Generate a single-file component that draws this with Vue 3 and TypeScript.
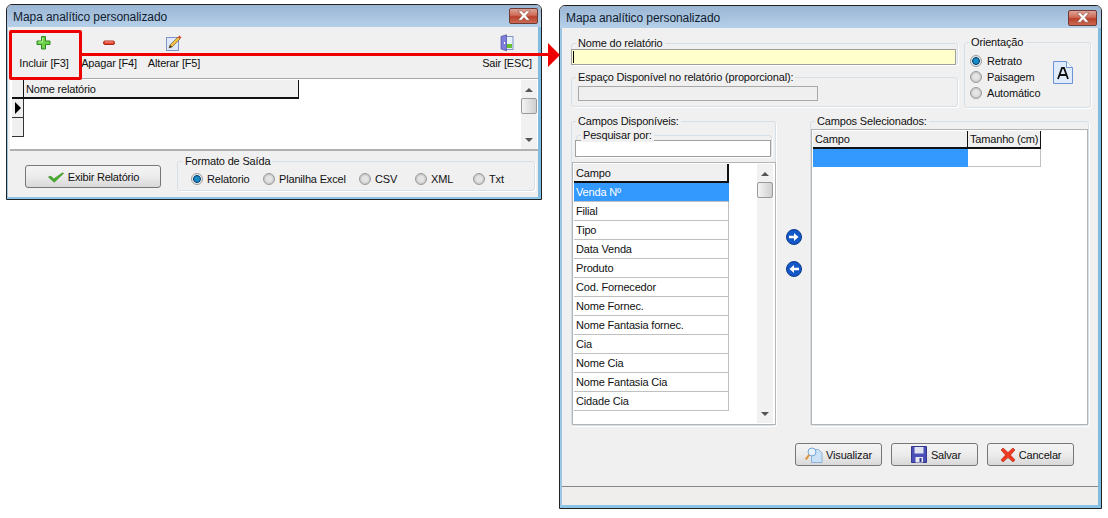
<script setup lang="ts">
const formats = [
  { label: 'Relatorio', checked: true, w: 72 },
  { label: 'Planilha Excel', checked: false, w: 96 },
  { label: 'CSV', checked: false, w: 56 },
  { label: 'XML', checked: false, w: 58 },
  { label: 'Txt', checked: false, w: 40 },
]
const orientations = [
  { label: 'Retrato', checked: true },
  { label: 'Paisagem', checked: false },
  { label: 'Automático', checked: false },
]
const fields = ['Filial', 'Tipo', 'Data Venda', 'Produto', 'Cod. Fornecedor', 'Nome Fornec.', 'Nome Fantasia fornec.', 'Cia', 'Nome Cia', 'Nome Fantasia Cia', 'Cidade Cia']
</script>

<template>
  <div class="desk">
    <section class="win left-win">
      <header class="title">
        <span>Mapa analítico personalizado</span>
        <div class="close"><svg width="16" height="11" viewBox="0 0 16 11"><path d="M2 .8h3.600L8 3.400 10.400.8H14L10 5.500l4 4.700h-3.600L8 7.600l-2.400 2.600H2l4-4.700z" fill="#fff" stroke="#8a4a40" stroke-width=".6"/></svg></div>
      </header>
      <div class="body">
        <div class="toolbar">
          <div class="tool t1">
            <svg width="16" height="16" viewBox="0 0 16 16"><path d="M5.500 1.500h4v4.500h4.500v3.500H9.500v4.500h-4V9.500H1V6h4.500z" fill="#6fd04a" stroke="#2d8a1e"/><path d="M6.500 3v4H2.500" fill="none" stroke="#b8f09a"/></svg>
            <span>Incluir [F3]</span>
          </div>
          <div class="tool t2">
            <svg width="14" height="16" viewBox="0 0 14 16"><rect x="1.500" y="6" width="11" height="3.500" rx="1.500" fill="#e2402a" stroke="#b02a18"/><path d="M3 7h8" stroke="#f5a090"/></svg>
            <span>Apagar [F4]</span>
          </div>
          <div class="tool t3">
            <svg width="18" height="18" viewBox="0 0 18 18"><rect x="1.500" y="3.500" width="12" height="13" fill="#dfe8f8" stroke="#7f93c9"/><path d="M4 14l1-3 8-8 2 2-8 8z" fill="#f0c040" stroke="#806030" stroke-width=".7"/><path d="M13 3l1.500-1.500 2 2L15 5z" fill="#d84a30"/><path d="M4 14l1-3 2 2z" fill="#333"/></svg>
            <span>Alterar [F5]</span>
          </div>
          <div class="tool t4">
            <svg width="14" height="18" viewBox="0 0 14 18"><rect x="5.500" y="2.500" width="7.500" height="13" fill="#e6f0f8" stroke="#7f93c9"/><rect x="7" y="10" width="5" height="4" fill="#63c132"/><path d="M1 2.500L6.500 .8v16L1 15z" fill="#7d7fd8" stroke="#4a4c9e" stroke-width=".7"/><rect x="4" y="8" width="1" height="2" fill="#fff"/></svg>
            <span>Sair [ESC]</span>
          </div>
        </div>
        <div class="report-grid">
          <div class="report-table">
            <div class="rt-head">
              <div class="corner"></div>
              <div class="col-name">Nome relatório</div>
            </div>
            <div class="indicator"><i></i></div>
            <div class="indicator"></div>
          </div>
          <div class="scroll left-scroll">
            <b class="up"></b>
            <div class="thumb"></div>
            <b class="down"></b>
          </div>
        </div>
        <div class="footer-bar">
          <div class="btn exibir">
            <svg width="18" height="13" viewBox="0 0 20 14"><path d="M1.500 7.500l3-.8 3 3L17 3l1.500.5L8 13.500z" fill="#44b02a" stroke="#2a7a18" stroke-width=".6"/></svg>
            <span>Exibir Relatório</span>
          </div>
          <div class="group format">
            <span class="legend">Formato de Saída</span>
            <label v-for="f in formats" :key="f.label" class="radio-item" :style="{ width: f.w + 'px' }">
              <span class="radio" :class="{ on: f.checked }"></span>{{ f.label }}
            </label>
          </div>
        </div>
      </div>
    </section>

    <section class="win right-win">
      <header class="title">
        <span>Mapa analítico personalizado</span>
        <div class="close"><svg width="16" height="11" viewBox="0 0 16 11"><path d="M2 .8h3.600L8 3.400 10.400.8H14L10 5.500l4 4.700h-3.600L8 7.600l-2.400 2.600H2l4-4.700z" fill="#fff" stroke="#8a4a40" stroke-width=".6"/></svg></div>
      </header>
      <div class="body">
        <div class="content">
          <div class="row1">
            <div class="col-main">
              <div class="group g-name">
                <span class="legend">Nome do relatório</span>
                <div class="yellow-input"><i></i></div>
              </div>
              <div class="group g-space">
                <span class="legend">Espaço Disponível no relatório (proporcional):</span>
                <div class="progress"></div>
              </div>
            </div>
            <div class="group g-orient">
              <span class="legend">Orientação</span>
              <div class="orient-list">
                <label v-for="o in orientations" :key="o.label" class="radio-item">
                  <span class="radio" :class="{ on: o.checked }"></span>{{ o.label }}
                </label>
              </div>
              <svg class="doc-a" width="20" height="23" viewBox="0 0 20 23"><path d="M.5.500h13l6 6v16H.5z" fill="#dfeafa" stroke="#6d94d8"/><path d="M13.500.500v6h6" fill="#fff" stroke="#6d94d8"/><path d="M5 18l4-11h2l4 11M6.500 14h7" fill="none" stroke="#111" stroke-width="1.800"/></svg>
            </div>
          </div>
          <div class="row2">
            <div class="group g-avail">
              <span class="legend">Campos Disponíveis:</span>
              <div class="group g-search">
                <span class="legend">Pesquisar por:</span>
                <div class="search"></div>
              </div>
              <div class="list-box">
                <div class="list">
                  <div class="list-head">Campo</div>
                  <div class="list-row selected">Venda Nº</div>
                  <div v-for="f in fields" :key="f" class="list-row">{{ f }}</div>
                </div>
                <div class="scroll list-scroll">
                  <b class="up"></b>
                  <div class="thumb"></div>
                  <b class="down"></b>
                </div>
              </div>
            </div>
            <div class="arrows">
              <svg width="16" height="16" viewBox="0 0 16 16"><circle cx="8" cy="8" r="7.500" fill="#1458c8" stroke="#0b3a8c"/><path d="M3 6.800h5V4l4.500 4L8 12V9.200H3z" fill="#fff"/></svg>
              <svg width="16" height="16" viewBox="0 0 16 16"><circle cx="8" cy="8" r="7.500" fill="#1458c8" stroke="#0b3a8c"/><path d="M13 6.800H8V4L3.500 8 8 12V9.200h5z" fill="#fff"/></svg>
            </div>
            <div class="group g-sel">
              <span class="legend">Campos Selecionados:</span>
              <div class="sel-box">
                <div class="sel-head">
                  <div class="sh1">Campo</div>
                  <div class="sh2">Tamanho (cm)</div>
                </div>
                <div class="sel-row">
                  <div class="sr1"></div>
                  <div class="sr2"></div>
                </div>
              </div>
            </div>
          </div>
          <div class="actions">
            <div class="btn act">
              <svg width="18" height="18" viewBox="0 0 18 18"><path d="M6.500 3.500h7l3.500 3.500v9.500H6.500z" fill="#c9e2f8" stroke="#8fb2d8"/><circle cx="7" cy="6" r="4" fill="#e6f3ff" stroke="#7aa4d0"/><path d="M4 9L.8 13.500" stroke="#e09030" stroke-width="2"/></svg>
              <span>Visualizar</span>
            </div>
            <div class="btn act save">
              <svg width="16" height="17" viewBox="0 0 16 17"><path d="M.5.500h15v16H.5z" fill="#4a50b8" stroke="#33388a"/><rect x="3.500" y="1" width="9" height="6.500" fill="#dfe4f0"/><rect x="4.500" y="11" width="7.500" height="5.500" fill="#e8e8f0"/><rect x="8.500" y="12" width="2" height="4" fill="#33388a"/></svg>
              <span>Salvar</span>
            </div>
            <div class="btn act">
              <svg width="16" height="16" viewBox="0 0 16 16"><path d="M1 3l2-2 5 4.500L13 1l2 2-4.500 5 4.500 5-2 2-5-4.500L3 15l-2-2 4.500-5z" fill="#ee3a20" stroke="#b52510" stroke-width=".6"/></svg>
              <span>Cancelar</span>
            </div>
          </div>
        </div>
        <div class="status"></div>
      </div>
    </section>

    <div class="mark-rect"></div>
    <div class="mark-line"></div>
    <div class="mark-head"></div>
  </div>
</template>

<style scoped>
* { box-sizing: border-box; }
.desk {
  position: relative;
  width: 1108px;
  height: 518px;
  background: #fff;
  font-family: "Liberation Sans", Arial, sans-serif;
  font-size: 11px;
  letter-spacing: -0.17px;
  color: #111;
  overflow: hidden;
}
.win {
  position: absolute;
  display: flex;
  flex-direction: column;
  border: 1px solid #222;
  border-radius: 6px 6px 0 0;
  background: #f0f0f0;
  overflow: hidden;
}
.left-win { left: 6px; top: 4px; width: 536px; height: 196px; }
.right-win { left: 559px; top: 5px; width: 543px; height: 504px; }
.title {
  height: 22px;
  flex: none;
  display: flex;
  align-items: center;
  justify-content: space-between;
  padding: 2px 3px 0 6px;
  background: linear-gradient(#9bb6d3, #b6d0ea);
  font-size: 12px;
  letter-spacing: -0.07px;
  color: #10202e;
}
.close {
  width: 29px;
  height: 16px;
  margin-top: -3px;
  display: flex;
  align-items: center;
  justify-content: center;
  border: 1px solid #6e3a34;
  border-radius: 2px;
  background: linear-gradient(#dda398 0, #cf6a56 45%, #b8402c 55%, #cc6a50 100%);
}
.right-win .close { margin-top: -1px; margin-right: 1px; }
.body {
  flex: 1;
  min-height: 0;
  display: flex;
  flex-direction: column;
  border-left: 1px solid #9cc6e4;
  border-right: 3px solid #7fbce0;
  border-bottom: 2px solid #8ac4e6;
  background: #f0f0f0;
}
.right-win .body { border-left-width: 2px; border-bottom-width: 3px; }

.toolbar { position: relative; height: 51px; flex: none; display: flex; }
.tool {
  display: flex;
  flex-direction: column;
  align-items: center;
  white-space: nowrap;
  width: 64px;
  height: 51px;
}
.tool svg { height: 18px; margin-top: 7px; }
.tool span { margin-top: 4px; line-height: 14px; }
.t1 { margin-left: 4px; }
.t2 { margin-left: 1px; }
.t3 { margin-left: 1px; }
.t4 { margin-left: auto; margin-right: -1px; }

.report-grid {
  height: 73px;
  flex: none;
  margin: 0 0 0 2px;
  display: flex;
  justify-content: space-between;
  background: #fff;
  border-top: 1px solid #a8a8a8;
  border-bottom: 2px solid #b0b0b0;
  padding: 1px 0 0 2px;
}
.report-table { width: 287px; }
.rt-head { display: flex; height: 19px; }
.corner {
  width: 12px;
  background: #f0f0f0;
  border-right: 1px solid #111;
  border-bottom: 2px solid #111;
}
.col-name {
  flex: 1;
  background: #f0f0f0;
  border-right: 1px solid #111;
  border-bottom: 2px solid #111;
  padding-left: 2px;
  line-height: 18px;
}
.indicator {
  width: 12px;
  height: 19px;
  background: #f0f0f0;
  border-bottom: 1px solid #333;
  border-right: 1px solid #333;
  display: flex;
  align-items: center;
  padding-left: 3px;
}
.indicator i {
  border-left: 6px solid #000;
  border-top: 6px solid transparent;
  border-bottom: 6px solid transparent;
}
.scroll {
  position: relative;
  width: 16px;
  background: #f1f1f1;
  flex: none;
}
.left-scroll { margin-right: 1px; height: 69px; }
.scroll .up, .scroll .down {
  position: absolute;
  left: 4px;
  border-left: 4px solid transparent;
  border-right: 4px solid transparent;
}
.scroll .up { top: 8px; border-bottom: 4px solid #555; }
.scroll .down { bottom: 7px; border-top: 4px solid #555; }
.thumb {
  position: absolute;
  left: 0;
  top: 18px;
  width: 16px;
  height: 16px;
  border: 1px solid #999;
  border-radius: 2px;
  background: linear-gradient(90deg, #f4f4f4, #cfcfcf);
}

.footer-bar { flex: 1; display: flex; padding-left: 17px; position: relative; }
.btn {
  display: flex;
  align-items: center;
  justify-content: center;
  height: 23px;
  border: 1px solid #777;
  border-radius: 3px;
  background: linear-gradient(#f4f4f4 0, #ececec 50%, #d8d8d8 100%);
}
.exibir { width: 136px; margin-top: 14px; gap: 3px; letter-spacing: -0.2px; }
.group {
  position: relative;
  border: 1px solid #d6dfe6;
  border-radius: 3px;
  box-shadow: 1px 1px 0 #fff;
}
.legend {
  position: absolute;
  top: -7px;
  left: 4px;
  padding: 0 2px;
  background: #f0f0f0;
  line-height: 13px;
  white-space: nowrap;
}
.format {
  width: 358px;
  height: 30px;
  margin: 10px 0 0 16px;
  display: flex;
  align-items: center;
  padding: 5px 0 0 13px;
}
.format .legend { left: 5px; }
.radio-item { display: flex; align-items: center; gap: 4px; white-space: nowrap; flex: none; }
.radio {
  display: block;
  width: 12px;
  height: 12px;
  flex: none;
  border-radius: 50%;
  border: 1px solid #9a9a9a;
  background: radial-gradient(circle at 50% 50%, #e4e4e4 0 35%, #c8c8c8 70%, #f5f5f5 100%);
}
.radio.on { background: radial-gradient(circle at 50% 50%, #1a8ac8 0 30%, #0d4f7c 50%, #e8e8e8 60%, #f5f5f5 100%); }

.content { flex: 1; min-height: 0; padding: 14px 0 0 9px; }
.row1 { display: flex; gap: 6px; }
.col-main { width: 387px; padding-top: 1px; }
.g-name { height: 22px; }
.yellow-input {
  width: 385px;
  height: 16px;
  margin: 5px 0 0 -1px;
  background: #ffffcc;
  border: 1px solid #a0a0a0;
  padding: 1px 0 1px 1px;
  position: relative;
}
.yellow-input i { display: block; width: 1px; height: 12px; background: #000; }
.g-space { height: 30px; margin-top: 12px; }
.progress {
  width: 240px;
  height: 15px;
  margin: 8px 0 0 6px;
  border: 1px solid #a8a8a8;
  background: #efefef;
}
.g-orient { width: 127px; height: 66px; display: flex; padding: 11px 0 0 5px; }
.orient-list { display: flex; flex-direction: column; gap: 3px; }
.orient-list .radio-item { height: 13px; gap: 5px; }
.doc-a { margin: 7px 17px 0 auto; }

.row2 { display: grid; grid-template-columns: 205px 34px 279px; height: 305px; margin-top: 13px; }
.g-avail { padding: 13px 0 0 4px; }
.g-search { width: 196px; height: 22px; }
.search {
  width: 196px;
  height: 17px;
  margin: 4px 0 0 -2px;
  background: #fff;
  border: 1px solid #a0a0a0;
}
.list-box {
  display: flex;
  justify-content: space-between;
  width: 204px;
  height: 263px;
  margin: 5px 0 0 -4px;
  background: #fff;
  border: 1px solid #b4b4b4;
  padding: 1px 2px 0 1px;
}
.list { width: 155px; }
.list-head {
  height: 19px;
  background: #f0f0f0;
  border-right: 2px solid #111;
  border-bottom: 2px solid #111;
  padding-left: 2px;
  line-height: 18px;
}
.list-row {
  height: 19px;
  border-bottom: 1px solid #c0c0c0;
  border-right: 1px solid #c0c0c0;
  padding-left: 2px;
  line-height: 18px;
}
.list-row.selected { background: #3399ff; color: #fff; border-right-color: #3399ff; }
.list-scroll { height: 259px; }

.arrows { display: flex; flex-direction: column; align-items: center; gap: 16px; padding: 108px 0 0 1px; }
.g-sel { padding: 7px 0 0 0; }
.sel-box {
  width: 277px;
  height: 296px;
  background: #fff;
  border: 1px solid #b4b4b4;
  padding: 1px;
}
.sel-head { display: flex; height: 18px; }
.sh1, .sh2 {
  background: #f0f0f0;
  border-right: 1px solid #111;
  border-bottom: 2px solid #111;
  padding-left: 2px;
  line-height: 17px;
  white-space: nowrap;
}
.sh1 { width: 155px; }
.sh2 { width: 73px; }
.sel-row { display: flex; height: 18px; }
.sr1 { width: 155px; background: #3399ff; }
.sr2 { width: 73px; border-right: 1px solid #c0c0c0; border-bottom: 1px solid #c0c0c0; }

.actions { display: flex; gap: 9px; margin-top: 17px; padding-left: 224px; }
.act { width: 87px; height: 23px; gap: 3px; }
.act.save { gap: 4px; padding-left: 3px; }
.status { height: 19px; flex: none; background: #f0eded; border-top: 1px solid #888; }

.mark-rect {
  position: absolute;
  left: 9px;
  top: 30px;
  width: 73px;
  height: 50px;
  border: 3px solid #ee0000;
  border-radius: 2px;
}
.mark-line {
  position: absolute;
  left: 82px;
  top: 53px;
  width: 467px;
  height: 3px;
  background: #ee0000;
}
.mark-head {
  position: absolute;
  left: 548px;
  top: 43px;
  border-left: 12px solid #ee0000;
  border-top: 12px solid transparent;
  border-bottom: 12px solid transparent;
}
</style>
